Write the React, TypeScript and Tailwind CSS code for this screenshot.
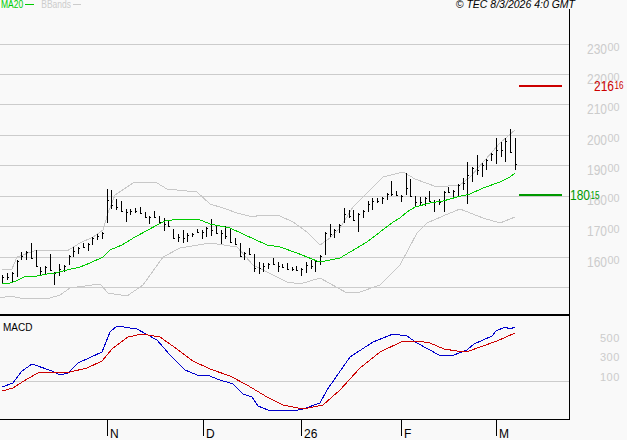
// Price chart with bollinger bands and macd panel
const bars: [number, number][] = [
  [275, 284], [273, 280], [272, 282], [260, 277], [252, 260], [251, 260], [243, 259], [250, 267], [267, 276], [266, 275],
  [254, 271], [272, 285], [264, 276], [265, 272], [255, 265], [247, 257], [247, 254], [243, 248], [243, 251], [237, 245],
  [234, 240], [232, 239], [189, 223], [190, 209], [199, 210], [201, 212], [209, 222], [209, 215], [208, 213], [207, 214],
  [212, 218], [216, 224], [211, 218], [216, 223], [218, 231], [221, 227], [229, 239], [234, 242], [230, 243], [233, 242],
  [233, 237], [229, 233], [230, 239], [227, 237], [219, 236], [226, 234], [230, 244], [226, 239], [228, 243], [238, 245],
  [243, 257], [252, 260], [248, 255], [254, 272], [262, 274], [263, 272], [263, 269], [258, 265], [262, 272], [264, 268],
  [263, 270], [267, 271], [266, 271], [268, 276], [262, 273], [260, 269], [260, 272], [255, 265], [232, 255], [224, 237],
  [229, 238], [224, 233], [208, 223], [210, 218], [210, 221], [213, 232], [210, 218], [201, 212], [198, 210], [198, 203],
  [197, 204], [193, 200], [181, 196], [191, 196], [195, 202], [173, 195], [179, 197], [196, 206], [197, 206], [197, 206],
  [191, 202], [200, 212], [199, 205], [191, 212], [187, 193], [190, 198], [184, 196], [178, 190], [162, 204], [167, 182],
  [155, 175], [163, 177], [159, 170], [153, 161], [138, 164], [142, 157], [138, 162], [129, 153], [138, 170],
];

const ma20 =
  "2,284 10,283 16,281 24,277 29,276 37,276 47,274 55,273 67,270 80,267 90,263 103,257 110,250 122,245 135,237 148,230 157,225 165,221 180,219 198,219 210,224 230,228 243,234 267,245 280,247 297,253 317,261 325,261 340,258 350,252 367,242 380,232 393,222 400,218 407,212 415,207 430,203 443,201 457,197 470,194 483,188 500,182 510,177 515,173";
const bbUpper =
  "2,269 12,269 17,257 37,250 67,251 80,243 93,237 103,230 108,213 115,195 133,183 145,182 157,183 167,189 197,192 210,204 223,208 237,213 253,217 260,215 280,216 293,222 307,232 320,245 330,238 340,228 353,207 370,190 383,177 403,172 405,173 415,179 437,187 460,185 470,177 500,143 515,130";
const bbLower =
  "0,298 10,296 20,298 50,298 60,295 70,288 100,284 108,293 127,296 143,285 163,257 180,248 210,243 237,247 253,265 267,272 287,282 300,284 320,278 347,293 360,292 380,285 400,265 417,233 427,223 443,216 460,209 483,218 500,223 515,217";
const macd =
  "2,387 13,383 22,371 32,364 52,371 60,375 68,373 78,363 102,352 110,332 117,326 137,329 157,340 170,355 185,370 197,375 210,376 217,379 233,384 243,394 252,397 258,406 268,410 293,411 303,409 320,403 327,390 350,357 373,342 393,334 407,336 417,343 439,355 454,355 467,350 474,344 492,336 496,331 505,327 510,329 515,327";
const signal =
  "2,391 13,388 27,379 38,373 70,372 87,368 102,361 112,349 128,337 142,334 160,337 177,349 193,361 210,369 230,376 247,385 267,397 283,405 303,409 323,405 340,390 360,368 380,352 403,341 417,341 430,343 444,349 457,351 469,351 497,341 515,333";

const gridLines = [44, 74, 104, 135, 165, 196, 226, 257, 287];
const priceLabels: [string, number][] = [
  ["230", 54], ["220", 84], ["210", 114], ["200", 145], ["190", 175], ["180", 205], ["170", 236], ["160", 267],
];
const macdLabels: [string, number][] = [["500", 342], ["300", 361], ["100", 381]];
const months: [string, number][] = [["N", 107], ["D", 203], ["26", 301], ["F", 401], ["M", 496]];

const clamp = (v: number, lo: number, hi: number) => Math.min(hi, Math.max(lo, v));

function PriceBars() {
  const closes = bars.map(([high, low], i) => {
    const next = bars[i + 1];
    const target = next ? (next[0] + next[1]) / 2 : low - 6;
    return Math.round(clamp(target, high + 1, low - 1));
  });
  return (
    <g className="stroke-black" shapeRendering="crispEdges" fill="none">
      {bars.map(([high, low], i) => {
        const x = Math.round(2.3 + i * 4.745) + 0.5;
        const open = Math.round(clamp(i ? closes[i - 1] : low - 3, high + 1, low - 1));
        return (
          <path
            key={i}
            d={`M${x} ${high}V${low}M${x - 1} ${open + 0.5}H${x}M${x} ${closes[i] + 0.5}H${x + 1.5}`}
          />
        );
      })}
    </g>
  );
}

// big figures plus the small raised decimals, squeezed to the width of the chart's bitmap font
function PriceLabel(props: { x: number; y: number; big: string; small: string; subW: number; subDy: number; className: string }) {
  const { x, y, big, small, subW, subDy, className } = props;
  return (
    <g className={className}>
      <text x={x} y={y} textLength="20" lengthAdjust="spacingAndGlyphs" className="text-[14px]">
        {big}
      </text>
      <text x={x + 20.5} y={y - subDy} textLength={subW} lengthAdjust="spacingAndGlyphs" className="text-[10px]">
        {small}
      </text>
    </g>
  );
}

export default function App() {
  return (
    <div className="flex h-[440px] w-[627px] flex-col overflow-hidden bg-[#f9f9f9] font-['Liberation_Sans',Arial,sans-serif]">
      <div className="flex h-[9px] items-center justify-between leading-[9px]">
        <div className="flex items-center pl-px text-[8.5px]">
          <span className="inline-block scale-y-[1.25] text-[#00cc00]">MA20</span>
          <span className="ml-[2px] h-px w-[9px] bg-[#00cc00]" />
          <span className="ml-[7px] inline-block scale-y-[1.25] text-[#cccccc]">BBands</span>
          <span className="ml-[2px] h-px w-[8px] bg-[#cccccc]" />
        </div>
        <span className="mr-[52px] text-[10.5px] italic text-black">© TEC 8/3/2026 4:0 GMT</span>
      </div>

      <svg width="627" height="431" viewBox="0 9 627 431">
        <g shapeRendering="crispEdges" fill="none">
          {gridLines.map((y) => (
            <line key={y} x1="0" x2="569" y1={y + 0.5} y2={y + 0.5} stroke="#cccccc" />
          ))}
          <line x1="0" x2="569" y1="381.5" y2="381.5" stroke="#cccccc" />
          <polyline points={bbUpper} stroke="#c8c8c8" />
          <polyline points={bbLower} stroke="#c8c8c8" />
        </g>

        <PriceBars />

        <g shapeRendering="crispEdges" fill="none">
          <polyline points={ma20} stroke="#00cc00" />
          <polyline points={macd} stroke="#0000cc" />
          <polyline points={signal} stroke="#cc0000" />
          <line x1="569.5" x2="569.5" y1="9" y2="420" stroke="black" />
          <line x1="0" x2="570" y1="315" y2="315" stroke="black" strokeWidth="2" />
          <line x1="0" x2="570" y1="419.5" y2="419.5" stroke="black" />
          {months.map(([, x]) => (
            <line key={x} x1={x + 0.5} x2={x + 0.5} y1="420" y2="436" stroke="black" />
          ))}
          <line x1="519" x2="562" y1="86" y2="86" stroke="#cc0000" strokeWidth="2" />
          <line x1="519" x2="562" y1="195" y2="195" stroke="#009900" strokeWidth="2" />
        </g>

        {priceLabels.map(([label, y]) => (
          <PriceLabel key={label} x={587} y={y} big={label} small="00" subW={12} subDy={3} className="fill-[#cccccc]" />
        ))}
        {macdLabels.map(([label, y]) => (
          <text key={label} x="600" y={y} className="fill-[#cccccc] text-[11px] tracking-[0.5px]">
            {label}
          </text>
        ))}

        <PriceLabel x={594} y={91} big="216" small="16" subW={9} subDy={2} className="fill-[#cc0000]" />
        <PriceLabel x={570} y={200} big="180" small="15" subW={9} subDy={1} className="fill-[#009900]" />

        <text x="3" y="331" className="fill-black text-[10px]">MACD</text>
        {months.map(([label, x]) => (
          <text key={label} x={x + 3} y="438" className="fill-black text-[12px]">
            {label}
          </text>
        ))}
      </svg>
    </div>
  );
}
